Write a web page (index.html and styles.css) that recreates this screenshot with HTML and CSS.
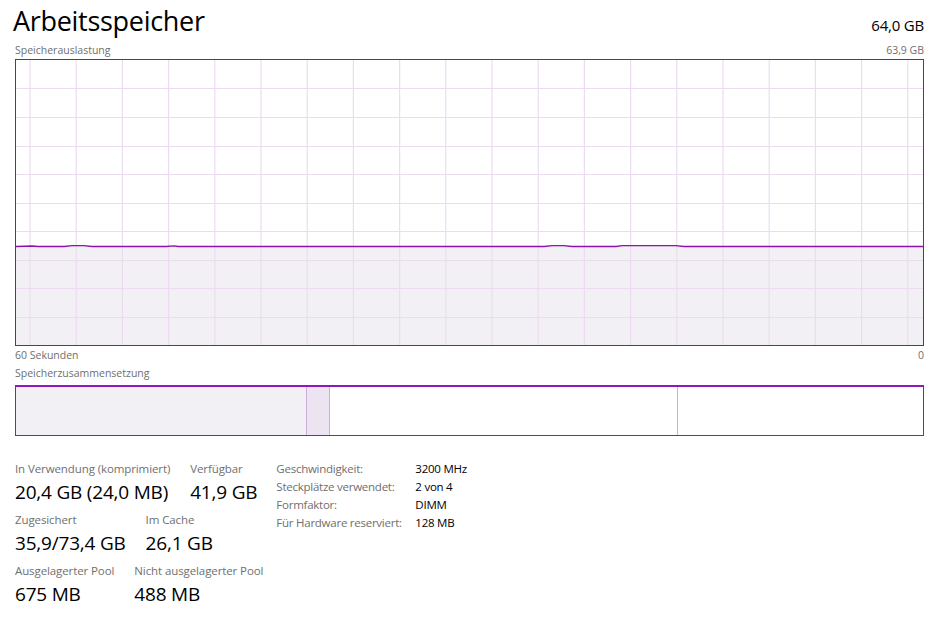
FILE: index.html
```html
<!DOCTYPE html>
<html lang="de">
<head>
<meta charset="utf-8">
<title>Arbeitsspeicher</title>
<link rel="stylesheet" href="styles.css">
</head>
<body>
<div class="page">
  <div class="header">
    <h1 class="title">Arbeitsspeicher</h1>
    <div class="total">64,0 GB</div>
  </div>
  <div class="subheader">
    <span>Speicherauslastung</span>
    <span>63,9 GB</span>
  </div>
  <div class="chart">
    <svg class="chart-svg" viewBox="0 0 907 285" preserveAspectRatio="none" xmlns="http://www.w3.org/2000/svg">
      <path class="fill" d="M0 186.5 L16 186 L22 186.5 L48 186.5 L56 185.7 L68 185.7 L76 186.5 L150 186.5 L158 185.8 L162 186.5 L528 186.5 L536 185.6 L548 185.6 L556 186.5 L600 186.5 L606 185.7 L660 185.7 L668 186.5 L907 186.5 L907 285 L0 285 Z"/>
      <g class="grid">
        <line x1="14" y1="0" x2="14" y2="285"/>
        <line x1="60.2" y1="0" x2="60.2" y2="285"/>
        <line x1="106.4" y1="0" x2="106.4" y2="285"/>
        <line x1="152.6" y1="0" x2="152.6" y2="285"/>
        <line x1="198.8" y1="0" x2="198.8" y2="285"/>
        <line x1="245" y1="0" x2="245" y2="285"/>
        <line x1="291.2" y1="0" x2="291.2" y2="285"/>
        <line x1="337.4" y1="0" x2="337.4" y2="285"/>
        <line x1="383.6" y1="0" x2="383.6" y2="285"/>
        <line x1="429.8" y1="0" x2="429.8" y2="285"/>
        <line x1="476" y1="0" x2="476" y2="285"/>
        <line x1="522.2" y1="0" x2="522.2" y2="285"/>
        <line x1="568.4" y1="0" x2="568.4" y2="285"/>
        <line x1="614.6" y1="0" x2="614.6" y2="285"/>
        <line x1="660.8" y1="0" x2="660.8" y2="285"/>
        <line x1="707" y1="0" x2="707" y2="285"/>
        <line x1="753.2" y1="0" x2="753.2" y2="285"/>
        <line x1="799.4" y1="0" x2="799.4" y2="285"/>
        <line x1="845.6" y1="0" x2="845.6" y2="285"/>
        <line x1="891.8" y1="0" x2="891.8" y2="285"/>
        <line x1="0" y1="28.5" x2="907" y2="28.5"/>
        <line x1="0" y1="57.5" x2="907" y2="57.5"/>
        <line x1="0" y1="86.5" x2="907" y2="86.5"/>
        <line x1="0" y1="114.5" x2="907" y2="114.5"/>
        <line x1="0" y1="143.5" x2="907" y2="143.5"/>
        <line x1="0" y1="171.5" x2="907" y2="171.5"/>
        <line x1="0" y1="200.5" x2="907" y2="200.5"/>
        <line x1="0" y1="228.5" x2="907" y2="228.5"/>
        <line x1="0" y1="257.5" x2="907" y2="257.5"/>
      </g>
      <path class="line" d="M0 186.5 L16 186 L22 186.5 L48 186.5 L56 185.7 L68 185.7 L76 186.5 L150 186.5 L158 185.8 L162 186.5 L528 186.5 L536 185.6 L548 185.6 L556 186.5 L600 186.5 L606 185.7 L660 185.7 L668 186.5 L907 186.5"/>
    </svg>
  </div>
  <div class="axis">
    <span>60 Sekunden</span>
    <span>0</span>
  </div>
  <div class="comp-label">Speicherzusammensetzung</div>
  <div class="comp-bar">
    <div class="seg seg-inuse" style="width:290px"></div>
    <div class="seg seg-modified" style="width:22px"></div>
    <div class="seg seg-standby" style="width:347px"></div>
    <div class="seg seg-free"></div>
  </div>
  <div class="stats">
    <div class="stats-left">
      <div class="stat-row">
        <div class="stat"><div class="stat-label">In Verwendung (komprimiert)</div><div class="stat-value">20,4 GB (24,0 MB)</div></div>
        <div class="stat"><div class="stat-label">Verfügbar</div><div class="stat-value">41,9 GB</div></div>
      </div>
      <div class="stat-row">
        <div class="stat"><div class="stat-label">Zugesichert</div><div class="stat-value">35,9/73,4 GB</div></div>
        <div class="stat"><div class="stat-label">Im Cache</div><div class="stat-value">26,1 GB</div></div>
      </div>
      <div class="stat-row">
        <div class="stat"><div class="stat-label">Ausgelagerter Pool</div><div class="stat-value">675 MB</div></div>
        <div class="stat"><div class="stat-label">Nicht ausgelagerter Pool</div><div class="stat-value">488 MB</div></div>
      </div>
    </div>
    <div class="props">
      <span class="prop-label">Geschwindigkeit:</span><span class="prop-value">3200 MHz</span>
      <span class="prop-label">Steckplätze verwendet:</span><span class="prop-value">2 von 4</span>
      <span class="prop-label">Formfaktor:</span><span class="prop-value">DIMM</span>
      <span class="prop-label">Für Hardware reserviert:</span><span class="prop-value">128 MB</span>
    </div>
  </div>
</div>
</body>
</html>
```

FILE: styles.css
```css
html, body {
  margin: 0;
  padding: 0;
  background: #ffffff;
}

body {
  font-family: "Open Sans", "Noto Sans", "Liberation Sans", sans-serif;
  color: #000000;
}

.page {
  width: 909px;
  padding: 0 5px 0 15px;
}

.header {
  display: flex;
  justify-content: space-between;
  align-items: baseline;
  height: 42px;
}

.title {
  margin: 0 0 0 -2px;
  font-weight: 400;
  font-size: 27px;
  line-height: 42px;
  letter-spacing: -0.3px;
}

.total {
  font-size: 15px;
  letter-spacing: -0.2px;
}

.subheader {
  display: flex;
  justify-content: space-between;
  font-size: 10.5px;
  line-height: 17px;
  color: #6f6f6f;
}

.chart {
  height: 285px;
  border: 1px solid #8b12ae;
  background: #ffffff;
}

.chart-svg {
  display: block;
  width: 100%;
  height: 100%;
}

.fill {
  fill: #f2f0f4;
}

.grid line {
  stroke: #ecdcf0;
  stroke-width: 1.2;
}

.line {
  fill: none;
  stroke: #8b12ae;
  stroke-width: 1.3;
}

.axis {
  display: flex;
  justify-content: space-between;
  font-size: 10.5px;
  line-height: 17px;
  color: #6f6f6f;
  padding-top: 1px;
}

.comp-label {
  font-size: 10.5px;
  line-height: 17px;
  color: #6f6f6f;
  margin-top: 1px;
  padding-bottom: 3px;
}

.comp-bar {
  display: flex;
  height: 48px;
  border: 1px solid #9016bd;
  border-width: 2px 1px 1px 1px;
}

.seg {
  height: 100%;
}

.seg-inuse {
  background: #f2f0f4;
  border-right: 1px solid #cfaadd;
}

.seg-modified {
  background: #ede4f1;
  border-right: 1px solid #cfaadd;
}

.seg-standby {
  background: #ffffff;
  border-right: 1px solid #cfaadd;
}

.seg-free {
  flex: 1;
  background: #ffffff;
}

.stats {
  display: flex;
  gap: 13px;
  margin-top: 25px;
}

.stats-left {
  display: flex;
  flex-direction: column;
  gap: 7px;
}

.stat-row {
  display: flex;
  gap: 20px;
}

.stat-label {
  font-size: 11.5px;
  line-height: 16px;
  color: #6f6f6f;
  letter-spacing: -0.1px;
}

.stat-value {
  font-size: 19px;
  line-height: 26px;
  margin-top: 2px;
  letter-spacing: -0.2px;
}

.props {
  display: grid;
  grid-template-columns: 139px auto;
  align-content: start;
  font-size: 11.5px;
  line-height: 18px;
  margin-top: -1px;
  letter-spacing: -0.25px;
}

.prop-label {
  color: #6f6f6f;
}

.prop-value {
  color: #000000;
}
```
